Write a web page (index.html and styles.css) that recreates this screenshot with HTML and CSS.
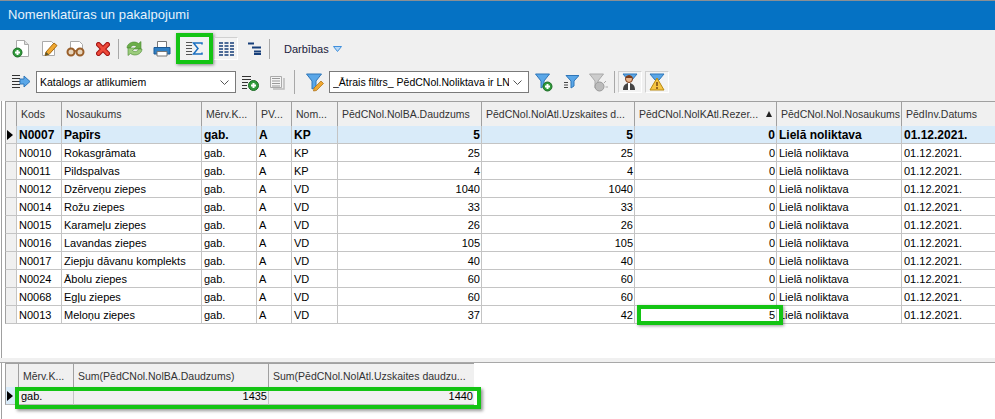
FILE: index.html
```html
<!DOCTYPE html>
<html lang="lv">
<head>
    <meta charset="UTF-8">
    <title>Nomenklatūras un pakalpojumi</title>
    <link rel="stylesheet" href="styles.css">
</head>
<body>
    <div class="window">
        <div class="title-bar">Nomenklatūras un pakalpojumi</div>

        <div class="toolbar toolbar-main">
            <span class="tool w-new"><svg width="18" height="19" viewBox="0 0 18 19"><path d="M4.500 1.500h8l4 4v12h-12z" fill="#fff" stroke="#aaa"/><path d="M12.500 1.500v4h4" fill="#ddd" stroke="#aaa"/><circle cx="5.500" cy="13.500" r="4.500" fill="#2f9a3a" stroke="#1c6b25"/><path d="M3 13.500h5M5.500 11v5" stroke="#fff" stroke-width="2"/></svg></span>
            <span class="tool w-edit"><svg width="17" height="17" viewBox="0 0 17 17"><path d="M1.500 1.500h9l3 3v11h-12z" fill="#fff" stroke="#aaa"/><path d="M5 12l8-9 3 2.500-8 9-4 1z" fill="#f0a830" stroke="#a86a10"/><path d="M4 15.500l1-3.500 3 2.500z" fill="#553"/></svg></span>
            <span class="tool w-view"><svg width="19" height="17" viewBox="0 0 19 17"><path d="M4.500 1.500h9l3 3v6h-12z" fill="#fff" stroke="#aaa"/><circle cx="5" cy="12" r="3.500" fill="#e6d5bd" stroke="#9a5f2a" stroke-width="2"/><circle cx="14" cy="12" r="3.500" fill="#e6d5bd" stroke="#9a5f2a" stroke-width="2"/><path d="M8 11h3" stroke="#9a5f2a" stroke-width="1.500"/></svg></span>
            <span class="tool w-del"><svg width="14" height="14" viewBox="0 0 14 14"><path d="M2.500 2.500l9 9M11.500 2.500l-9 9" stroke="#a31414" stroke-width="5" stroke-linecap="round"/><path d="M2.500 2.500l9 9M11.500 2.500l-9 9" stroke="#ee4a3a" stroke-width="3" stroke-linecap="round"/></svg></span>
            <span class="sep sep-a"></span>
            <span class="tool w-refresh"><svg width="17" height="17" viewBox="0 0 17 17"><path d="M1 8C1 3 8 0 12.500 3.500L15 1.500V9H8l2.500-2.500C8 4.500 5 5.500 4.500 8z" fill="#6cae4a" stroke="#4a8a33" stroke-width=".6"/><path d="M16 9c0 5-7 8-11.500 4.500L2 15.500V8h7l-2.500 2.500C9 12.500 12 11.500 12.500 9z" fill="#9ccc7c" stroke="#4a8a33" stroke-width=".6"/></svg></span>
            <span class="tool w-print"><svg width="18" height="17" viewBox="0 0 18 17"><path d="M4.500 1.500h9v6h-9z" fill="#fff" stroke="#777"/><path d="M1 7.500h16v6.500H1z" fill="#2f7fc4" stroke="#1c5a96"/><path d="M4 11.500h10V16H4z" fill="#fff" stroke="#777"/></svg></span>
            <span class="tool-box tool-sigma"><svg width="17" height="13" viewBox="0 0 17 13"><path d="M0 .500h6M0 3.500h6M0 6.500h6M0 9.500h6M0 12.500h6" stroke="#555"/><path d="M16 2.500V1H7.500l4.500 5.500L7.500 12H16v-1.500" fill="none" stroke="#1a6fc0" stroke-width="1.500"/></svg></span>
            <span class="tool-box tool-cols"><svg width="15" height="14" viewBox="0 0 15 14"><path d="M0 1h4M5.500 1h4M11 1h4M0 4h4M5.500 4h4M11 4h4M0 7h4M5.500 7h4M11 7h4M0 10h4M5.500 10h4M11 10h4M0 13h4M5.500 13h4M11 13h4" stroke="#173f7a" stroke-width="1.600"/></svg></span>
            <span class="tool w-tree"><svg width="13" height="13" viewBox="0 0 13 13"><path d="M0 1.500h6M4 5.500h9M6 9.500h7M6 12h7" stroke="#173f7a" stroke-width="2"/></svg></span>
            <span class="sep sep-b"></span>
            <span class="menu-label">Darbības</span>
            <svg class="menu-arrow" width="9" height="6" viewBox="0 0 9 6"><path d="M.5.500h8L4.500 5.500z" fill="#b9d8f5" stroke="#3f8fdc"/></svg>
        </div>

        <div class="toolbar toolbar-filter">
            <span class="tool w-list"><svg width="18" height="16" viewBox="0 0 18 16"><path d="M0 1.500h8M0 4.500h8M0 7.500h8M0 10.500h8M0 13.500h8" stroke="#333"/><path d="M8 5h4V2l6 5.500-6 5.500V10H8z" fill="#5aa7e8" stroke="#2f76b8"/></svg></span>
            <div class="combo combo-first"><span class="combo-text">Katalogs ar atlikumiem</span><svg class="chevron" width="9" height="5" viewBox="0 0 9 5"><path d="M.5.500l4 4 4-4" fill="none" stroke="#555"/></svg></div>
            <span class="tool w-list-add"><svg width="17" height="17" viewBox="0 0 17 17"><path d="M0 2.500h9M0 5.500h9M0 8.500h6M0 11.500h5M0 14.500h5" stroke="#333"/><circle cx="11.500" cy="11.500" r="5" fill="#2f9a3a" stroke="#1c6b25"/><path d="M9 11.500h5M11.500 9v5" stroke="#fff" stroke-width="2"/></svg></span>
            <span class="tool w-list-off"><svg width="17" height="15" viewBox="0 0 17 15"><path d="M1.500 1.500h11v11h-11z" fill="#f4f4f4" stroke="#aaa"/><path d="M3 3.500h8M3 6h8M3 8.500h8M3 11h8" stroke="#999"/><path d="M15 3v11H4" fill="none" stroke="#bbb" stroke-width="1.500"/></svg></span>
            <span class="sep sep-c"></span>
            <span class="tool w-funnel"><svg width="18" height="19" viewBox="0 0 18 19"><path d="M.5 1h15L10 8v6L6 16V8z" fill="#5aa7e8" stroke="#2f76b8"/><path d="M8 15l7-7 2.500 2.500-7 7-3 .500z" fill="#f0a830" stroke="#a86a10" stroke-width=".7"/></svg></span>
            <div class="combo combo-second"><span class="combo-text">_Ātrais filtrs_ PēdCNol.Noliktava ir LN</span><svg class="chevron" width="9" height="5" viewBox="0 0 9 5"><path d="M.5.500l4 4 4-4" fill="none" stroke="#555"/></svg></div>
            <span class="tool w-f-add"><svg width="18" height="19" viewBox="0 0 18 19"><path d="M.5 1h14L9 8v5l-3 2V8z" fill="#5aa7e8" stroke="#2f76b8"/><circle cx="12.500" cy="13.500" r="4.500" fill="#2f9a3a" stroke="#1c6b25"/><path d="M10 13.500h5M12.500 11v5" stroke="#fff" stroke-width="2"/></svg></span>
            <span class="tool w-f-list"><svg width="15" height="14" viewBox="0 0 15 14"><path d="M0 7.500h4M0 10h4M0 12.500h4" stroke="#444"/><path d="M2 .500h13L10 6v5l-3 2V6z" fill="#5aa7e8" stroke="#2f76b8"/></svg></span>
            <span class="tool w-f-off"><svg width="19" height="19" viewBox="0 0 19 19"><path d="M.5 1h14L9 8v5l-3 2V8z" fill="#ccc" stroke="#aaa"/><circle cx="10.500" cy="13.500" r="4.500" fill="#bbb" stroke="#999"/><path d="M15 10l2-2M16.500 14H19" stroke="#aaa"/></svg></span>
            <span class="sep sep-d"></span>
            <span class="tool-box tool-user"><svg width="16" height="18" viewBox="0 0 16 18"><path d="M1 1h14L10 7H6z" fill="#5aa7e8" stroke="#2f76b8"/><circle cx="7" cy="6" r="3.500" fill="#e8b890" stroke="#7a3a1a"/><path d="M3.500 5c0-3 7-3 7 0z" fill="#7a3a1a"/><path d="M1 17c0-5 3-7 6-7s6 2 6 7z" fill="#444"/><path d="M6 10h2v7H6z" fill="#fff"/></svg></span>
            <span class="tool-box tool-warn"><svg width="16" height="18" viewBox="0 0 16 18"><path d="M1 1h14L10 7H6z" fill="#5aa7e8" stroke="#2f76b8"/><path d="M8 5l7 12H1z" fill="#f6c544" stroke="#b98a10"/><path d="M8 9v4M8 14v2" stroke="#7a4a10" stroke-width="1.500"/></svg></span>
        </div>

        <div class="grid-pane">
            <table class="grid main-grid">
                <colgroup>
                    <col class="c-ind"><col class="c-kods"><col class="c-nos"><col class="c-merv"><col class="c-pv"><col class="c-nom">
                    <col class="c-ba"><col class="c-atl"><col class="c-rez"><col class="c-nol"><col class="c-dat">
                </colgroup>
                <thead>
                    <tr>
                        <th></th><th>Kods</th><th>Nosaukums</th><th>Mērv.K...</th><th>PV...</th><th>Nom...</th>
                        <th>PēdCNol.NolBA.Daudzums</th><th>PēdCNol.NolAtl.Uzskaites d...</th>
                        <th><span class="sort-head"><span>PēdCNol.NolKAtl.Rezer...</span><span class="sort-mark"></span></span></th>
                        <th>PēdCNol.Nol.Nosaukums</th><th>PēdInv.Datums</th>
                    </tr>
                </thead>
                <tbody>
                    <tr class="current">
                        <td class="ind"><span class="pointer"></span></td><td>N0007</td><td>Papīrs</td><td>gab.</td><td>A</td><td>KP</td>
                        <td class="num">5</td><td class="num">5</td><td class="num">0</td><td>Lielā noliktava</td><td>01.12.2021.</td>
                    </tr>
                    <tr><td class="ind"></td><td>N0010</td><td>Rokasgrāmata</td><td>gab.</td><td>A</td><td>KP</td><td class="num">25</td><td class="num">25</td><td class="num">0</td><td>Lielā noliktava</td><td>01.12.2021.</td></tr>
                    <tr><td class="ind"></td><td>N0011</td><td>Pildspalvas</td><td>gab.</td><td>A</td><td>KP</td><td class="num">4</td><td class="num">4</td><td class="num">0</td><td>Lielā noliktava</td><td>01.12.2021.</td></tr>
                    <tr><td class="ind"></td><td>N0012</td><td>Dzērveņu ziepes</td><td>gab.</td><td>A</td><td>VD</td><td class="num">1040</td><td class="num">1040</td><td class="num">0</td><td>Lielā noliktava</td><td>01.12.2021.</td></tr>
                    <tr><td class="ind"></td><td>N0014</td><td>Rožu ziepes</td><td>gab.</td><td>A</td><td>VD</td><td class="num">33</td><td class="num">33</td><td class="num">0</td><td>Lielā noliktava</td><td>01.12.2021.</td></tr>
                    <tr><td class="ind"></td><td>N0015</td><td>Karameļu ziepes</td><td>gab.</td><td>A</td><td>VD</td><td class="num">26</td><td class="num">26</td><td class="num">0</td><td>Lielā noliktava</td><td>01.12.2021.</td></tr>
                    <tr><td class="ind"></td><td>N0016</td><td>Lavandas ziepes</td><td>gab.</td><td>A</td><td>VD</td><td class="num">105</td><td class="num">105</td><td class="num">0</td><td>Lielā noliktava</td><td>01.12.2021.</td></tr>
                    <tr><td class="ind"></td><td>N0017</td><td>Ziepju dāvanu komplekts</td><td>gab.</td><td>A</td><td>VD</td><td class="num">40</td><td class="num">40</td><td class="num">0</td><td>Lielā noliktava</td><td>01.12.2021.</td></tr>
                    <tr><td class="ind"></td><td>N0024</td><td>Ābolu ziepes</td><td>gab.</td><td>A</td><td>VD</td><td class="num">60</td><td class="num">60</td><td class="num">0</td><td>Lielā noliktava</td><td>01.12.2021.</td></tr>
                    <tr><td class="ind"></td><td>N0068</td><td>Egļu ziepes</td><td>gab.</td><td>A</td><td>VD</td><td class="num">60</td><td class="num">60</td><td class="num">0</td><td>Lielā noliktava</td><td>01.12.2021.</td></tr>
                    <tr><td class="ind"></td><td>N0013</td><td>Meloņu ziepes</td><td>gab.</td><td>A</td><td>VD</td><td class="num">37</td><td class="num">42</td><td class="num marked">5</td><td>Lielā noliktava</td><td>01.12.2021.</td></tr>
                </tbody>
            </table>
        </div>

        <div class="splitter"></div>

        <div class="sum-pane">
            <table class="grid sum-grid">
                <colgroup>
                    <col class="s-ind"><col class="s-merv"><col class="s-ba"><col class="s-atl">
                </colgroup>
                <thead>
                    <tr><th></th><th>Mērv.K...</th><th>Sum(PēdCNol.NolBA.Daudzums)</th><th>Sum(PēdCNol.NolAtl.Uzskaites daudzu...</th></tr>
                </thead>
                <tbody>
                    <tr><td class="ind ind-sum"><span class="pointer"></span></td><td class="marked-row">gab.</td><td class="num">1435</td><td class="num">1440</td></tr>
                </tbody>
            </table>
        </div>
    </div>
</body>
</html>
```

FILE: styles.css
```css
html, body {
    margin: 0;
    padding: 0;
    background-color: #fff;
}

.window {
    width: 995px;
    height: 419px;
    overflow: hidden;
    font-family: "Liberation Sans", Arial, sans-serif;
    font-size: 11px;
    color: #000;
    background-color: #fff;
}

.title-bar {
    box-sizing: border-box;
    height: 30px;
    padding-left: 8px;
    line-height: 28px;
    font-size: 13px;
    letter-spacing: 0.1px;
    color: #e8f3fb;
    background-color: #0572c4;
    border-top: 1px solid #8a8f94;
}

.toolbar {
    display: flex;
    align-items: center;
    background-color: #f0f0f0;
    box-sizing: border-box;
    padding-left: 12px;
}

.toolbar-main {
    height: 37px;
}

.toolbar-filter {
    height: 34px;
    padding-bottom: 4px;
}

.tool {
    display: flex;
    flex: none;
    align-items: center;
    justify-content: center;
}

.tool svg, .tool-box svg, .menu-arrow, .chevron {
    display: block;
    flex: none;
}

.tool-box {
    display: flex;
    flex: none;
    align-items: center;
    justify-content: center;
    box-sizing: border-box;
    background-color: #f3f3f3;
    border: 1px solid #fff;
    border-top-color: #d0d0d0;
    border-left-color: #d0d0d0;
}

.w-new { width: 18px; }
.w-edit { width: 17px; margin-left: 11px; }
.w-view { width: 19px; margin-left: 8px; }
.w-del { width: 14px; margin-left: 11px; }
.sep { flex: none; width: 1px; background-color: #a8a8a8; }
.sep-a { height: 20px; margin-left: 8px; }
.w-refresh { width: 17px; margin-left: 7px; }
.w-print { width: 18px; margin-left: 10px; }

.tool-sigma {
    width: 37px;
    height: 31px;
    margin-left: 5px;
    border: 4px solid #14c414;
    background-color: #f2f2f2;
    box-shadow: 1px 1px 3px rgba(0, 0, 0, 0.45);
}

.tool-cols { width: 24px; height: 23px; margin-left: 1px; }
.w-tree { width: 13px; margin-left: 10px; }
.sep-b { height: 20px; margin-left: 8px; }

.menu-label {
    margin-left: 14px;
    color: #1a1a3a;
}

.menu-arrow {
    margin-left: 4px;
}

.w-list { width: 18px; }

.combo {
    display: flex;
    flex: none;
    align-items: center;
    justify-content: space-between;
    box-sizing: border-box;
    width: 200px;
    height: 22px;
    padding: 0 6px 0 3px;
    background-color: #fff;
    border: 1px solid #7a7a7a;
}

.combo-text {
    overflow: hidden;
    white-space: nowrap;
    width: 176px;
    font-size: 10.5px;
}

.combo-first { margin-left: 6px; }
.w-list-add { width: 17px; margin-left: 6px; }
.w-list-off { width: 17px; margin-left: 10px; }
.sep-c { height: 24px; margin-left: 8px; }
.w-funnel { width: 18px; margin-left: 11px; }
.combo-second { margin-left: 5px; }
.w-f-add { width: 18px; margin-left: 6px; }
.w-f-list { width: 15px; margin-left: 11px; }
.w-f-off { width: 19px; margin-left: 10px; }
.sep-d { height: 22px; margin-left: 6px; }
.tool-user { width: 24px; height: 22px; margin-left: 3px; }
.tool-warn { width: 24px; height: 22px; margin-left: 3px; }

.grid-pane {
    height: 257px;
    margin-left: 1px;
    padding-left: 3px;
    border-left: 1px solid #a0a0a0;
    box-sizing: border-box;
}

.grid {
    table-layout: fixed;
    border-collapse: separate;
    border-spacing: 0;
    background-color: #fff;
}

.main-grid { width: 990px; }

.c-ind { width: 11px; }
.c-kods { width: 45px; }
.c-nos { width: 140px; }
.c-merv { width: 55px; }
.c-pv { width: 35px; }
.c-nom { width: 46px; }
.c-ba { width: 144px; }
.c-atl { width: 153px; }
.c-rez { width: 142px; }
.c-nol { width: 125px; }
.c-dat { width: 94px; }

.grid th {
    box-sizing: border-box;
    height: 25px;
    padding: 0 0 0 4px;
    font-weight: normal;
    font-size: 10.5px;
    text-align: left;
    white-space: nowrap;
    overflow: hidden;
    color: #333;
    background-color: #f0f0f0;
    border-top: 1px solid #a0a0a0;
    border-left: 1px solid #a0a0a0;
}

.grid td {
    box-sizing: border-box;
    height: 18px;
    padding: 0 1px 0 2px;
    white-space: nowrap;
    overflow: hidden;
    border-bottom: 1px solid #c4c4c4;
    border-left: 1px solid #c4c4c4;
}

.grid td.num {
    text-align: right;
}

.grid td.ind {
    padding: 0;
    background-color: #f0f0f0;
    border-left: 1px solid #a0a0a0;
}

.current td {
    font-size: 12px;
    font-weight: bold;
    background-color: #d9ebf9;
}

.pointer {
    display: block;
    width: 0;
    height: 0;
    margin-left: 1px;
    border-top: 5px solid transparent;
    border-bottom: 5px solid transparent;
    border-left: 6px solid #000;
}

.sort-head {
    display: flex;
    align-items: center;
    justify-content: space-between;
    padding-right: 4px;
}

.sort-mark {
    width: 0;
    height: 0;
    border-left: 3px solid transparent;
    border-right: 3px solid transparent;
    border-bottom: 6px solid #222;
}

.grid td.marked, .grid td.marked-row {
    position: relative;
    overflow: visible;
}

.marked::after {
    content: "";
    position: absolute;
    top: -1px;
    left: 2px;
    width: 146px;
    height: 20px;
    box-sizing: border-box;
    border: 4px solid #14c414;
    box-shadow: 1px 1px 3px rgba(0, 0, 0, 0.4);
}

.splitter {
    height: 5px;
    box-sizing: border-box;
    background-color: #f0f0f0;
    border-bottom: 1px solid #a8a8a8;
}

.sum-pane {
    height: 56px;
    margin-left: 1px;
    padding-left: 3px;
    border-left: 1px solid #a0a0a0;
    box-sizing: border-box;
}

.sum-grid { width: 469px; }

.s-ind { width: 13px; }
.s-merv { width: 55px; }
.s-ba { width: 195px; }
.s-atl { width: 206px; }

.sum-grid th {
    height: 24px;
}

.sum-grid td {
    background-color: #f0f0f0;
    border-bottom-color: #b8b8b8;
}

.sum-grid td.ind-sum {
    background-color: #d9ebf9;
}

.marked-row::after {
    content: "";
    position: absolute;
    top: 0;
    left: -4px;
    width: 466px;
    height: 22px;
    box-sizing: border-box;
    border: 4px solid #14c414;
    box-shadow: 2px 2px 3px rgba(0, 0, 0, 0.4);
}
```
